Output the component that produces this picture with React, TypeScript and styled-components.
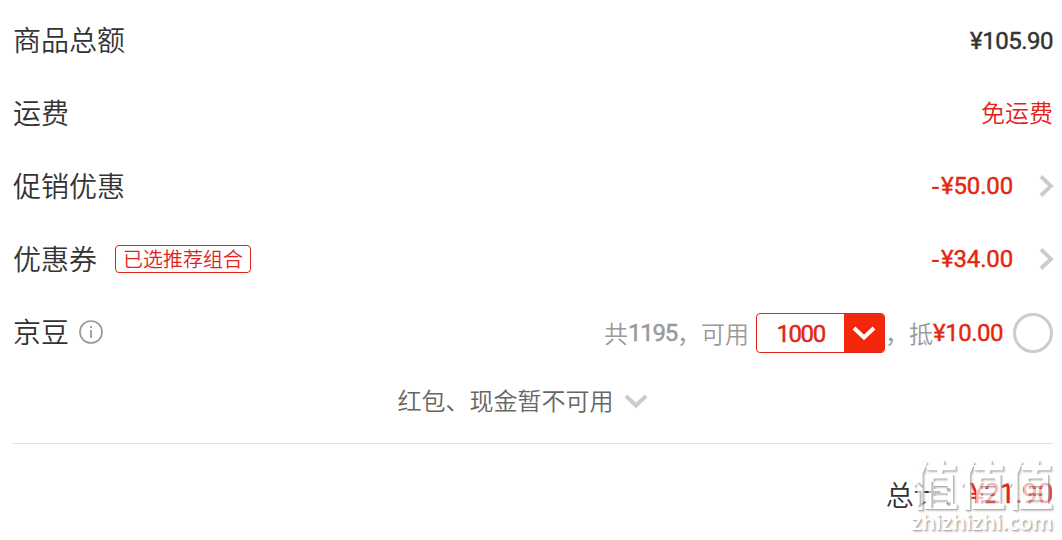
import React from "react";
import styled, {createGlobalStyle} from "styled-components";

const GlobalStyle = createGlobalStyle`
    * {
        box-sizing: border-box;
    }

    body {
        margin: 0;
        background: #fff;
        color: #333;
        font-family: "Noto Sans CJK SC", sans-serif;
        font-weight: 350;
    }
`;

const Page = styled.main`
    position: relative;
    width: 1062px;
    height: 540px;
    padding: 4px 9px 0 13px;
    overflow: hidden;
`;

const Row = styled.div`
    display: flex;
    align-items: center;
    justify-content: space-between;
    height: 73px;
`;

const Label = styled.div`
    display: flex;
    align-items: center;
    padding-bottom: 4px;
    font-size: 28px;
    line-height: 40px;
    white-space: nowrap;
`;

const Value = styled.div<{color?: string; $lift?: number}>`
    display: flex;
    align-items: center;
    padding-bottom: ${(props) => props.$lift || 0}px;
    color: ${(props) => props.color || "#333"};
    font-size: 24px;
    line-height: 36px;
    white-space: nowrap;
`;

const Digits = styled.span<{color?: string; $size?: number; $spacing?: number}>`
    color: ${(props) => props.color || "inherit"};
    font-family: Roboto, sans-serif;
    font-size: ${(props) => props.$size || 24}px;
    font-weight: 400;
    letter-spacing: ${(props) => props.$spacing ?? -0.5}px;
    -webkit-text-stroke: 0.45px currentColor;
`;

const Minus = styled.span`
    margin-right: 1px;
    font-family: "Liberation Sans", sans-serif;
    font-size: 27px;
`;

const Tag = styled.span`
    height: 28px;
    margin: 2px 0 0 18px;
    padding: 0 7px;
    border: 1px solid #e2231a;
    border-radius: 4px;
    color: #e2231a;
    font-size: 20px;
    line-height: 25px;
`;

const Select = styled.div`
    display: flex;
    width: 129px;
    height: 40px;
    margin-left: 7px;
    border: 1px solid #e2231a;
    border-radius: 4px;
    overflow: hidden;
`;

const Amount = styled.div`
    flex: 1;
    color: #e4270f;
    line-height: 36px;
    text-align: center;
`;

const Toggle = styled.div`
    display: flex;
    align-items: center;
    justify-content: center;
    width: 40px;
    background: #f2270c;
`;

const Radio = styled.span`
    width: 40px;
    height: 40px;
    margin-left: 10px;
    border: 3px solid #ccc;
    border-radius: 50%;
`;

const More = styled.div`
    display: flex;
    align-items: center;
    justify-content: center;
    height: 75px;
    padding: 0 21px 12px 0;
    border-bottom: 1px solid #e3e3e3;
    color: #666;
    font-size: 24px;
    line-height: 36px;
`;

const Total = styled.div`
    display: flex;
    align-items: center;
    justify-content: flex-end;
    height: 99px;
    font-size: 28px;
`;

const Watermark = styled.div`
    position: absolute;
    right: 8px;
    bottom: 5px;
    width: 144px;
    color: #fff;
    opacity: 0.68;
    text-align: center;
    text-shadow: 1px 1px 1px #888, 2px 2px 2px #bbb;
`;

const Mark = styled.div`
    height: 53px;
    font-size: 47.5px;
    font-weight: 700;
    line-height: 49px;
    white-space: nowrap;
    transform: scaleY(1.1);
`;

const Site = styled.div`
    font-family: "Noto Sans", sans-serif;
    font-size: 21.5px;
    font-weight: 600;
    line-height: 24px;
    transform: translateY(-1px);
`;

const RightIcon = styled.svg`
    width: 16px;
    height: 24px;
    margin-left: 26px;
    margin-right: -2px;
`;

const DownIcon = styled.svg<{$gap?: number}>`
    width: 24px;
    height: 16px;
    margin-top: 1px;
    margin-left: ${(props) => props.$gap || 0}px;
`;

const InfoIcon = styled.svg`
    width: 24px;
    height: 24px;
    margin: 3px 0 0 10px;
`;

const Right = () => (
    <RightIcon viewBox="0 0 16 24" fill="none">
        <path d="M2 2.5L12 12L2 21.5" stroke="#ccc" strokeWidth="3.8"/>
    </RightIcon>
);

const Down = ({color, gap}: {color: string; gap?: number}) => (
    <DownIcon viewBox="0 0 24 16" fill="none" $gap={gap}>
        <path d="M2 3L12 12.5L22 3" stroke={color} strokeWidth="4"/>
    </DownIcon>
);

const App = () => (
    <Page>
        <GlobalStyle/>
        <Row>
            <Label>商品总额</Label>
            <Value><Digits>¥105.90</Digits></Value>
        </Row>
        <Row>
            <Label>运费</Label>
            <Value color="#e2231a" $lift={4}>免运费</Value>
        </Row>
        <Row>
            <Label>促销优惠</Label>
            <Value color="#e4270f" $lift={2}><Minus>-</Minus><Digits $spacing={-0.15}>¥50.00</Digits><Right/></Value>
        </Row>
        <Row>
            <Label>优惠券<Tag>已选推荐组合</Tag></Label>
            <Value color="#e4270f" $lift={2}><Minus>-</Minus><Digits $spacing={-0.15}>¥34.00</Digits><Right/></Value>
        </Row>
        <Row>
            <Label>
                京豆
                <InfoIcon viewBox="0 0 24 24" fill="none" stroke="#999">
                    <circle cx="12" cy="12" r="11" strokeWidth="1.7"/>
                    <path d="M12 10V18M12 6V8" strokeWidth="1.8"/>
                </InfoIcon>
            </Label>
            <Value color="#999">
                共<Digits $spacing={-1.2}>1195</Digits>，可用
                <Select>
                    <Amount><Digits $spacing={-1.4}>1000</Digits></Amount>
                    <Toggle><Down color="#fff"/></Toggle>
                </Select>
                ，抵<Digits color="#e4270f">¥10.00</Digits>
                <Radio/>
            </Value>
        </Row>
        <More>红包、现金暂不可用<Down color="#ccc" gap={10}/></More>
        <Total>总计：<Digits color="#e2231a" $size={28} $spacing={-0.3}>¥21.90</Digits></Total>
        <Watermark>
            <Mark>值值值</Mark>
            <Site>zhizhizhi.com</Site>
        </Watermark>
    </Page>
);

export default App;
